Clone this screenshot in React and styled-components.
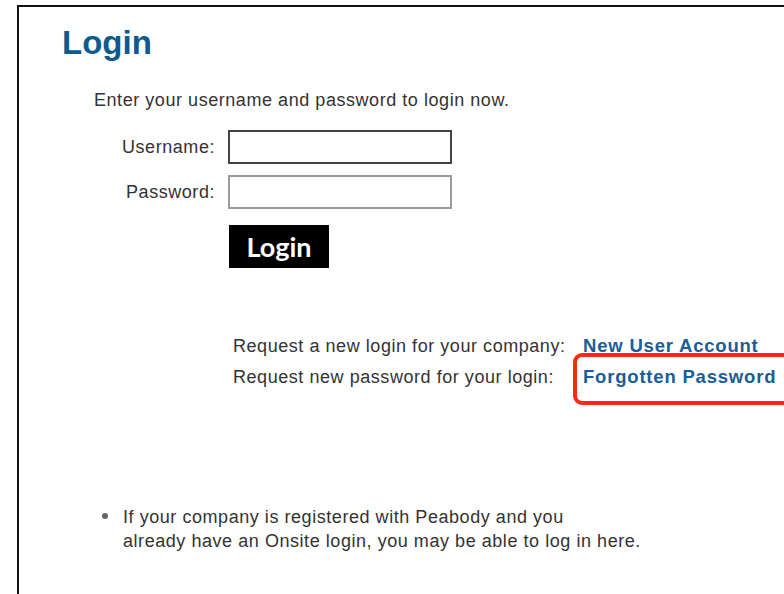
import React from "react";
import styled, { createGlobalStyle } from "styled-components";

const Global = createGlobalStyle`
  html, body { margin: 0; padding: 0; background: #fff; }
  body { font-family: "Liberation Sans", Arial, sans-serif; color: #333; overflow: hidden; }
`;

const Frame = styled.div`
  position: relative;
  margin: 5px 0 0 17px;
  border-top: 2px solid #111;
  border-left: 2px solid #111;
  height: 620px;
  box-sizing: border-box;
`;

const Title = styled.h1`
  margin: 0;
  padding: 16px 0 0 43px;
  font-family: "Liberation Sans", Arial, sans-serif;
  font-weight: 700;
  font-size: 33px;
  line-height: 40px;
  color: #0d5a8e;
`;

const Copy = styled.p`
  margin: 0;
  padding: 26px 0 0 75px;
  font-size: 18px;
  letter-spacing: 0.55px;
  line-height: 22px;
  color: #333;
`;

const FormGrid = styled.div`
  display: grid;
  grid-template-columns: 196px 224px;
  column-gap: 13px;
  row-gap: 11px;
  align-items: center;
  padding: 19px 0 0 0;
`;

const Label = styled.label`
  text-align: right;
  font-size: 18px;
  letter-spacing: 0.55px;
  color: #333;
`;

const Field = styled.input`
  box-sizing: border-box;
  width: 224px;
  height: 34px;
  border: 2px solid ${(p) => (p.$focused ? "#444" : "#9a9a9a")};
  background: #fff;
  margin: 0;
  outline: none;
`;

const SubmitButton = styled.button`
  grid-column: 2;
  justify-self: start;
  margin: 5px 0 0 1px;
  width: 100px;
  height: 43px;
  background: #000;
  border: none;
  color: #fff;
  font-family: Lato, "Open Sans", sans-serif;
  font-weight: 700;
  font-size: 27px;
  line-height: 43px;
  padding: 0 0 4px 0;
  cursor: pointer;
`;

const Links = styled.div`
  display: grid;
  grid-template-columns: 350px auto;
  row-gap: 9px;
  padding: 67px 0 0 214px;
  font-size: 18px;
  letter-spacing: 0.55px;
  line-height: 22px;
`;

const LinkText = styled.span`
  color: #333;
  white-space: nowrap;
`;

const Action = styled.a`
  color: #1b5d96;
  font-weight: 700;
  font-size: 18.5px;
  letter-spacing: 0.8px;
  text-decoration: none;
  white-space: nowrap;
`;

const Highlight = styled.div`
  position: absolute;
  left: 554px;
  top: 346px;
  width: 260px;
  height: 52px;
  box-sizing: border-box;
  border: 4px solid #ff2a12;
  border-radius: 9px;
`;

const Notes = styled.ul`
  margin: 0;
  padding: 117px 0 0 104px;
  list-style: none;
`;

const Note = styled.li`
  position: relative;
  font-size: 18px;
  letter-spacing: 0.55px;
  line-height: 24px;
  color: #333;
  white-space: nowrap;

  &::before {
    content: "";
    position: absolute;
    left: -21px;
    top: 8px;
    width: 6px;
    height: 6px;
    border-radius: 50%;
    background: #666;
  }
`;

export default function App() {
  return (
    <>
      <Global />
      <Frame>
        <Title>Login</Title>
        <Copy>Enter your username and password to login now.</Copy>
        <FormGrid>
          <Label htmlFor="user">Username:</Label>
          <Field id="user" type="text" $focused />
          <Label htmlFor="pass">Password:</Label>
          <Field id="pass" type="password" />
          <SubmitButton type="button">Login</SubmitButton>
        </FormGrid>
        <Links>
          <LinkText>Request a new login for your company:</LinkText>
          <Action href="#">New User Account</Action>
          <LinkText>Request new password for your login:</LinkText>
          <Action href="#">Forgotten Password</Action>
        </Links>
        <Notes>
          <Note>
            If your company is registered with Peabody and you
            <br />
            already have an Onsite login, you may be able to log in here.
          </Note>
        </Notes>
        <Highlight />
      </Frame>
    </>
  );
}
